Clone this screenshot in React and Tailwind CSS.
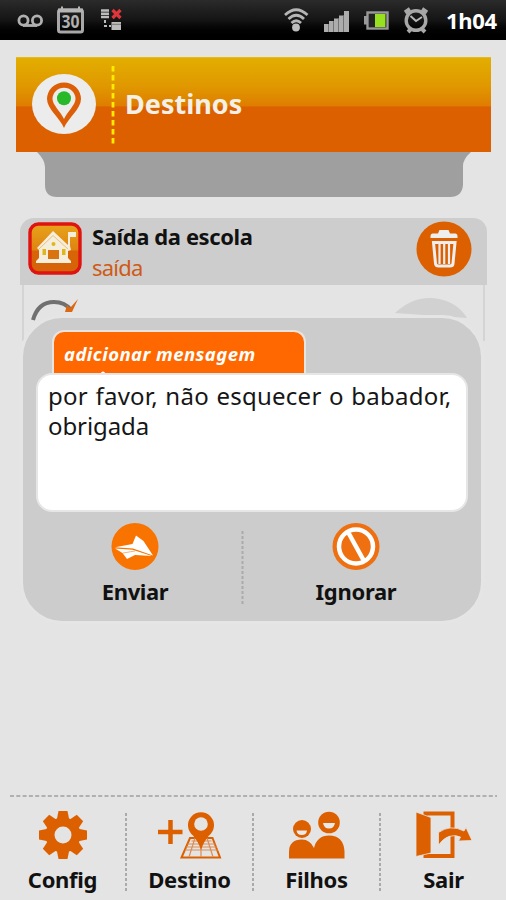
import React from "react";

const StatusBar = () => {
  return (
    <div className="flex h-10 shrink-0 items-center bg-linear-to-b from-[#2b2b2b] via-[#151515] to-black">
      <svg width="253" height="40" viewBox="0 0 253 40" fill="none">
        <g stroke="#b0b0b0" strokeWidth="2.8">
          <circle cx="23.5" cy="20.5" r="4.6" />
          <circle cx="37" cy="20.5" r="4.6" />
          <path d="M23 25.5h14" />
        </g>
        <rect x="58.5" y="10" width="24" height="22" rx="2" stroke="#a8a8a8" strokeWidth="3" />
        <path d="M58 10.5h25" stroke="#b5b5b5" strokeWidth="4" />
        <path d="M62 6.5v4M79 6.5v4" stroke="#b5b5b5" strokeWidth="2" />
        <text x="70.5" y="27.5" textAnchor="middle" fontSize="17" fontWeight="700" fill="#b0b0b0" fontFamily="Noto Sans, sans-serif" textLength="18" lengthAdjust="spacingAndGlyphs">30</text>
        <path d="M101 10.500h8M101 13.700h8M101 17h8" stroke="#bdbdbd" strokeWidth="2.400" />
        <path d="M112.500 10l8 8M120.500 10l-8 8" stroke="#e0353b" strokeWidth="3.200" />
        <path d="M105 20v6h6" stroke="#bbb" strokeWidth="2" strokeDasharray="3 2" />
        <path d="M111.500 22h9.500v8h-9.500z" fill="#bdbdbd" />
        <path d="M111.500 24.300h9.500" stroke="#777" strokeWidth="1" />
      </svg>
      <svg width="183" height="40" viewBox="253 0 183 40" fill="none">
        <g stroke="#b5b5b5" strokeWidth="2.800">
          <path d="M285 15q11.200-10.500 22.500 0" />
          <path d="M288.500 19q7.700-7.500 15.500 0" />
          <path d="M291.500 23q4.700-4.500 9.500 0" />
        </g>
        <circle cx="296" cy="27.500" r="3.900" fill="#bdbdbd" />
        <path d="M324 24h5v8h-5zM329 21h5v11h-5zM334 18.500h5V32h-5zM339 15.500h5V32h-5zM344 11h5v21h-5z" fill="#adadad" />
        <path d="M328.500 24v8M333.500 21v11M338.500 18.500V32M343.500 15.500V32" stroke="#666" strokeWidth=".8" />
        <rect x="367.500" y="12.500" width="20" height="16" stroke="#999" strokeWidth="2.400" />
        <path d="M365.500 16v8.500" stroke="#999" strokeWidth="3" />
        <rect x="369" y="14" width="6" height="13" fill="#222" />
        <rect x="375" y="14" width="10.500" height="13" fill="#96e020" />
        <circle cx="416" cy="20.500" r="9.800" stroke="#a8a8a8" strokeWidth="3.400" />
        <path d="M410.500 16l5.500 5 6-4" stroke="#b8b8b8" strokeWidth="2" />
        <path d="M405 12.500l5-3.500M427 12.500l-5-3.500M408 32l3-3M425 32l-3-3" stroke="#a8a8a8" strokeWidth="4" />
      </svg>
      <span className="ml-2.5 text-[22px] font-bold tracking-[-0.3px] text-white">1h04</span>
    </div>
  );
};

const Header = () => {
  return (
    <div className="mt-[17px]">
      <div className="ml-4 flex h-[95px] w-[475px] items-center border-t border-[#e5bc20] bg-[linear-gradient(#e2ae00_0%,#e09800_30%,#df7d00_51%,#dc6000_52%,#dc6000_100%)]">
        <svg className="ml-4" width="64" height="62" viewBox="0 0 64 62">
          <ellipse cx="32" cy="30" rx="32" ry="30" fill="#ececec" />
          <path d="M32 54C28 44 15 35 15 25a17 16.500 0 0 1 34 0C49 35 36 44 32 54z" fill="#dc5f08" />
          <path d="M32 45C29 38 20.500 31 20.500 25a11.500 11.300 0 0 1 23 0C43.500 31 35 38 32 45z" fill="#ececec" />
          <circle cx="32" cy="24.300" r="7" fill="#28b928" />
        </svg>
        <svg className="ml-[15px]" width="4" height="78">
          <path d="M2 0v78" stroke="#ffec00" strokeWidth="2.800" strokeDasharray="5.500 3.500" />
        </svg>
        <h1 className="ml-2.5 pb-[3px] text-[27px] leading-none font-bold text-[#f3f0e8]">Destinos</h1>
      </div>
      <svg className="ml-[37px]" width="434" height="46" viewBox="0 0 434 46">
        <path d="M0 0h434q-8 7-8 14v19q-1 12-13 12H20q-12 0-12-12V15Q8 8 0 0z" fill="#9f9f9f" />
      </svg>
    </div>
  );
};

const DestinationCard = () => {
  return (
    <div className="mt-5 ml-5 w-[467px]">
      <div className="flex h-[67px] rounded-t-[14px] bg-[#cdcdcd]">
        <svg className="mt-1 ml-2 shrink-0" width="54" height="53" viewBox="0 0 54 53">
          <defs>
            <linearGradient id="school" x1="0" y1="0" x2="0" y2="1">
              <stop offset="0" stopColor="#e8a41a" />
              <stop offset=".52" stopColor="#df8410" />
              <stop offset=".56" stopColor="#d96408" />
              <stop offset="1" stopColor="#d66308" />
            </linearGradient>
          </defs>
          <rect x="2" y="2" width="50" height="49" rx="8.500" fill="url(#school)" stroke="#df1410" strokeWidth="3.400" />
          <path d="M9 26L25 9l15 14V10h2v14l1 4-3 1v7l3 3v2H8v-2l3-3v-8z" fill="#f6eedc" />
          <path d="M42 10h6v5h-6z" fill="#f6eedc" />
          <path d="M11 27L25 13.500l15 13.500" fill="none" stroke="#e5b56a" strokeWidth=".8" />
          <path d="M20 28h11v9H20z" fill="#d97410" />
          <path d="M14.500 27h3.500v6h-3.500zM34 27h3.500v6H34z" fill="#dfb71a" />
          <circle cx="25.500" cy="22" r="2" fill="#dfb71a" />
        </svg>
        <div className="ml-2.5 flex flex-1 flex-col pt-[3px]">
          <span className="text-[22px] leading-[31px] font-bold tracking-[-0.4px] whitespace-nowrap text-[#111]">Saída da escola</span>
          <span className="text-[22px] leading-[31px] tracking-[-0.8px] text-[#cf5a15]">saída</span>
        </div>
        <svg className="mt-[3px] mr-[15px] shrink-0" width="56" height="56" viewBox="0 0 56 56">
          <circle cx="28" cy="28" r="27.500" fill="#dc6000" />
          <path d="M14.500 15q0-2.500 2-2.500h5.500l1.500-3.500h9l1.500 3.500h5.500q2 0 2 2.500V17H14.500z" fill="#eee" />
          <path d="M17.500 21.500h21.500l-2 21q-.2 2.500-3 2.500H22.500q-2.800 0-3-2.500z" fill="#dc6000" stroke="#eee" strokeWidth="3" />
          <path d="M23.500 23v20M28.200 23v20M33 23v20" stroke="#eee" strokeWidth="2.200" />
        </svg>
      </div>
      <div className="mx-0.5 h-14 border-x-2 border-[#d4d4d4]">
        <svg width="459" height="56" viewBox="24 285 459 56" fill="none">
          <path d="M33 320q5-18 21-18 11 0 17 8" stroke="#707070" strokeWidth="4" />
          <path d="M65 312l2-7 3 3 8-9-6 13z" fill="#dc6812" />
          <path d="M395 313q17-16 37-15 24 2 35 20z" fill="#d1d1d1" />
        </svg>
      </div>
    </div>
  );
};

const MessageDialog = () => {
  return (
    <div className="absolute top-[315px] left-5 h-[309px] w-[464px] rounded-[42px] border-[3px] border-[#e5e5e5] bg-[#cccccc]">
      <div className="mt-3 ml-[29px] h-[43px] w-[254px] overflow-hidden rounded-t-[12px] border-2 border-b-0 border-[#e8e4e0] bg-[#ff6800] pt-[9px] pl-2.5">
        <span className="block text-[18.500px] leading-[25px] font-bold tracking-[0.45px] whitespace-nowrap text-white italic">adicionar mensagem</span>
        <svg className="mt-1 ml-9" width="6" height="4"><circle cx="3" cy="3.500" r="2" fill="#fff" /></svg>
      </div>
      <div className="ml-[13px] h-[139px] w-[432px] rounded-[16px] border-2 border-[#e6e6e6] bg-white pt-1.5 pl-[10px]">
        <p className="text-[24px] leading-[30px] tracking-[0.250px] [word-spacing:1px] whitespace-nowrap text-[#161616]">
          por favor, não esquecer o babador,
          <br />
          <span className="tracking-[-0.1px]">obrigada</span>
        </p>
      </div>
      <div className="flex h-[108px] pt-[11px]">
        <button className="flex w-[218px] flex-col items-center pl-1.5">
          <svg width="48" height="48" viewBox="0 0 48 48">
            <circle cx="24" cy="23.500" r="23.500" fill="#f97300" />
            <path d="M4 24.300L21.500 21l3.500-8.500 7.500 5.500L42 32.500 22 25.500z" fill="#fff" />
            <path d="M4 25.500l17.500 1.300L41 33l-17-1-8 4-4.500-6z" fill="#fff" />
            <path d="M12 30l12-2" stroke="#f9a050" strokeWidth=".8" />
          </svg>
          <span className="mt-[7px] text-[22px] leading-[27px] font-bold tracking-[-0.4px] text-[#111]">Enviar</span>
        </button>
        <svg className="mt-2" width="3" height="74">
          <path d="M1.500 0v74" stroke="#aaa" strokeWidth="2" strokeDasharray="3 2" />
        </svg>
        <button className="flex w-[220px] flex-col items-center pl-1">
          <svg width="48" height="48" viewBox="0 0 48 48" fill="none">
            <circle cx="24" cy="23.500" r="23.500" fill="#ee7010" />
            <circle cx="24" cy="23.500" r="17" stroke="#fff" strokeWidth="4.500" />
            <path d="M16 9l16 29" stroke="#fff" strokeWidth="4.500" />
          </svg>
          <span className="mt-[7px] text-[22px] leading-[27px] font-bold tracking-[-0.3px] text-[#111]">Ignorar</span>
        </button>
      </div>
    </div>
  );
};

const ConfigIcon = () => (
  <svg width="48" height="48" viewBox="0 0 48 48">
    <g fill="#dc6000">
      <circle cx="24" cy="24" r="17.500" />
      <path d="M17.500 10l2-10h9l2 10z" />
      <path d="M17.500 10l2-10h9l2 10z" transform="rotate(45 24 24)" />
      <path d="M17.500 10l2-10h9l2 10z" transform="rotate(90 24 24)" />
      <path d="M17.500 10l2-10h9l2 10z" transform="rotate(135 24 24)" />
      <path d="M17.500 10l2-10h9l2 10z" transform="rotate(180 24 24)" />
      <path d="M17.500 10l2-10h9l2 10z" transform="rotate(225 24 24)" />
      <path d="M17.500 10l2-10h9l2 10z" transform="rotate(270 24 24)" />
      <path d="M17.500 10l2-10h9l2 10z" transform="rotate(315 24 24)" />
    </g>
    <circle cx="24" cy="24" r="8.500" fill="#e4e4e4" />
  </svg>
);

const DestinoIcon = () => (
  <svg width="64" height="48" viewBox="0 0 64 48" fill="none">
    <path d="M0 21h24.500M12.500 9v24" stroke="#dc6000" strokeWidth="4.500" />
    <path d="M32 27h22.500l7.500 19.500H23.500z" stroke="#dc6000" strokeWidth="2" />
    <path d="M29.500 33h28M27 39h33M37 27l-6 19M43 27v19M49 27l6 19M33.500 30h20M28 36h31" stroke="#dc8d55" strokeWidth="1.200" />
    <path d="M43 39q-3-9-8-14.500A13 13 0 1 1 51 24.500Q46 30 43 39z" fill="#dc6000" />
    <circle cx="43" cy="13" r="6.800" fill="#e4e4e4" />
  </svg>
);

const FilhosIcon = () => (
  <svg width="56" height="48" viewBox="0 0 56 48">
    <g fill="#dc6000">
      <circle cx="40" cy="11.500" r="10.800" />
      <circle cx="13" cy="18" r="9" />
      <path d="M0 47.500V41q0-12.500 13-12.500 8 0 12 8.500 3-12.500 15-12.500 14.500 0 15.500 16v7z" />
    </g>
    <path d="M34 12h12q-1 5.500-6 5.500T34 12zM7.500 19.500h10.500q-.5 4.500-5.200 4.500t-5.300-4.500z" fill="#e9e9e9" />
  </svg>
);

const SairIcon = () => (
  <svg width="56" height="48" viewBox="0 0 56 48">
    <path d="M9.500 2.500h27v42.500h-27z" fill="none" stroke="#dc6000" strokeWidth="4" />
    <path d="M0 1l15 5.500V42L0 45.500z" fill="#dc6000" stroke="#e4e4e4" strokeWidth=".8" />
    <path d="M22.500 34V21.500q12-8.500 25.500-1.500l2-3.500 6 13-13.500.5 2-4Q32 21 22.500 34z" fill="#dc6000" stroke="#e4e4e4" strokeWidth=".8" />
  </svg>
);

const Divider = () => (
  <svg className="mt-4 shrink-0" width="2" height="80">
    <path d="M1 0v80" stroke="#aaa" strokeWidth="2" strokeDasharray="3 2" />
  </svg>
);

const items = [
  { label: "Config", icon: <ConfigIcon /> },
  { label: "Destino", icon: <DestinoIcon /> },
  { label: "Filhos", icon: <FilhosIcon /> },
  { label: "Sair", icon: <SairIcon /> },
];

const BottomNav = () => {
  return (
    <div className="mt-auto h-[105px]">
      <svg className="ml-2.5 block" width="487" height="2">
        <path d="M0 1h487" stroke="#b0b0b0" strokeWidth="2" strokeDasharray="4 2.300" />
      </svg>
      <div className="flex">
        {items.map((item, i) => (
          <React.Fragment key={item.label}>
            {i > 0 && <Divider />}
            <button className="flex w-[125.300px] flex-col items-center pt-3.5">
              {item.icon}
              <span className="mt-[7px] text-[22px] leading-[27px] font-bold tracking-[-0.3px] text-[#111]">{item.label}</span>
            </button>
          </React.Fragment>
        ))}
      </div>
    </div>
  );
};

const App = () => {
  return (
    <div className="relative flex h-[900px] w-[506px] flex-col overflow-hidden bg-[#e4e4e4] font-['Noto_Sans',sans-serif]">
      <StatusBar />
      <Header />
      <DestinationCard />
      <MessageDialog />
      <BottomNav />
    </div>
  );
};

export default App;
